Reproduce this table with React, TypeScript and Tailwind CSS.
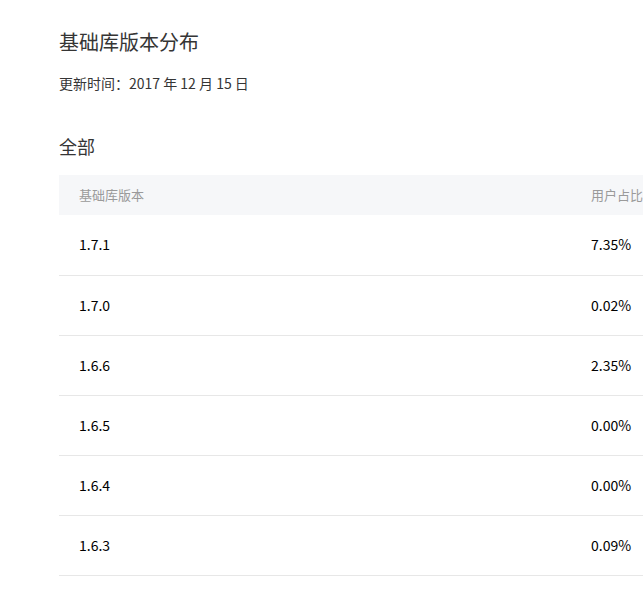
const rows = [
  {version: "1.7.1", ratio: "7.35%"},
  {version: "1.7.0", ratio: "0.02%"},
  {version: "1.6.6", ratio: "2.35%"},
  {version: "1.6.5", ratio: "0.00%"},
  {version: "1.6.4", ratio: "0.00%"},
  {version: "1.6.3", ratio: "0.09%"},
];

const App = () => (
  <div className="w-[643px] h-[597px] overflow-hidden bg-white font-['Noto_Sans_CJK_SC',sans-serif]">
    <div className="w-[800px] pl-[59px] pt-[27px]">
      <h1 className="text-[20px] leading-[30px] text-[#353535] font-normal">基础库版本分布</h1>
      <p className="mt-[16px] text-[14px] leading-[20px] text-[#353535]">更新时间：2017 年 12 月 15 日</p>
      <h2 className="mt-[40px] text-[18px] leading-[26px] text-[#353535] font-normal">全部</h2>
      <table className="mt-[16px] w-[700px] border-collapse text-left">
        <thead>
          <tr className="bg-[#f6f7f9] h-[40px]">
            <th className="w-[512px] pl-[20px] text-[13px] font-normal text-[#9a9a9a]">基础库版本</th>
            <th className="pl-[20px] text-[13px] font-normal text-[#9a9a9a]">用户占比</th>
          </tr>
        </thead>
        <tbody>
          {rows.map((r) => (
            <tr key={r.version} className="h-[60px] border-b border-[#e7e7e7]">
              <td className="pl-[20px] text-[14px] text-black">{r.version}</td>
              <td className="pl-[20px] text-[14px] text-black">{r.ratio}</td>
            </tr>
          ))}
        </tbody>
      </table>
    </div>
  </div>
);

export default App;
